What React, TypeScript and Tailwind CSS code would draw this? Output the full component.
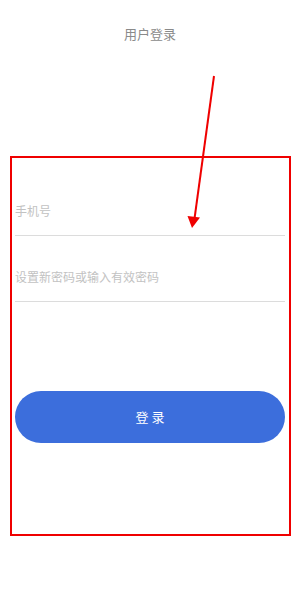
export default function App() {
  return (
    <div
      className="relative w-[300px] h-[598px] bg-white overflow-hidden"
      style={{ fontFamily: '"Noto Sans CJK SC", "Noto Sans", sans-serif' }}
    >
      {/* header */}
      <div className="pt-[24px] h-[44px] text-center text-[13px] leading-[20px] text-[#8a8a8a]">用户登录</div>

      {/* highlighted form area */}
      <div className="mt-[112px] ml-[10px] w-[281px] h-[380px] border-2 border-[#ef0000] pt-[29px] pl-[3px] pr-[4px]">
        <div className="h-[49px] flex items-center border-b border-[#dcdcdc]">
          <input
            placeholder="手机号"
            className="w-full bg-transparent outline-none text-[12px] text-[#333] placeholder:text-[#c2c2c2]"
          />
        </div>
        <div className="mt-[17px] h-[49px] flex items-center border-b border-[#dcdcdc]">
          <input
            type="password"
            placeholder="设置新密码或输入有效密码"
            className="w-full bg-transparent outline-none text-[12px] text-[#333] placeholder:text-[#c2c2c2]"
          />
        </div>
        <button className="mt-[89px] w-full h-[52px] rounded-full bg-[#3c6edc] text-white text-[13px]">
          登 录
        </button>
      </div>

      {/* annotation arrow */}
      <svg className="absolute inset-0 pointer-events-none" width="300" height="598" viewBox="0 0 300 598">
        <line x1="214" y1="76" x2="194.6" y2="218" stroke="#ef0000" strokeWidth="2" />
        <polygon points="187.5,216 200,217.6 192,228" fill="#ef0000" />
      </svg>
    </div>
  )
}
